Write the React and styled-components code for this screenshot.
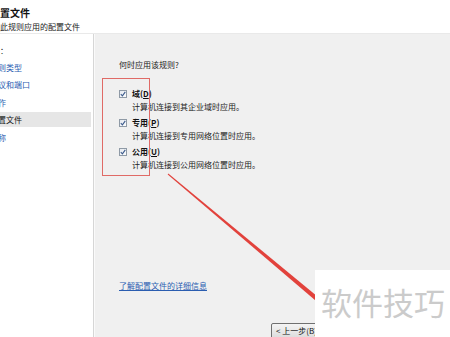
import React from 'react';
import styled, { createGlobalStyle } from 'styled-components';

const GlobalStyle = createGlobalStyle`
  html, body { margin: 0; padding: 0; background: #f0f0f0; }
  body { font-family: "Noto Sans CJK SC", "Noto Sans", sans-serif; }
`;

const Page = styled.div`
  position: relative;
  width: 450px;
  height: 337px;
  overflow: hidden;
  background: #f0f0f0;
`;

const Frame = styled.div`
  display: flex;
  flex-direction: column;
  margin-left: -16px;
  height: 100%;
`;

const TopEdge = styled.div`
  height: 2px;
  background: linear-gradient(to bottom, #c3cfe0, #8d99a8);
`;

const Header = styled.div`
  height: 40px;
  background: #fff;
  border-bottom: 1px solid #e9e9e9;
  display: flex;
  flex-direction: column;
  padding-top: 6px;
  box-sizing: border-box;
`;

const Title = styled.div`
  font-size: 10px;
  font-weight: 700;
  line-height: 14px;
  color: #111;
  padding-left: 6px;
`;

const Subtitle = styled.div`
  font-size: 8px;
  line-height: 13px;
  color: #222;
`;

const Body = styled.div`
  flex: 1;
  display: flex;
`;

const Sidebar = styled.div`
  width: 109px;
  background: #fff;
  border-right: 1px solid #d6d6d6;
  box-shadow: 1px 0 0 #fafafa;
  padding-top: 10px;
  display: flex;
  flex-direction: column;
`;

const StepsHead = styled.div`
  font-size: 8px;
  line-height: 13px;
  color: #222;
  margin-bottom: 3px;
`;

const Step = styled.div`
  font-size: 8px;
  line-height: 15px;
  height: 15px;
  margin-bottom: 2.4px;
  padding-left: 6px;
  color: ${p => (p.$active ? '#111' : '#2a5db0')};
  background: ${p => (p.$active ? '#e6e6e6' : 'transparent')};
  margin-right: 2px;
`;

const Content = styled.div`
  flex: 1;
  padding: 24px 0 0 23px;
  margin-left: 2px;
  display: flex;
  flex-direction: column;
`;

const Question = styled.div`
  font-size: 8px;
  line-height: 13px;
  color: #222;
  margin-bottom: 16px;
`;

const Options = styled.div`
  display: flex;
  flex-direction: column;
  gap: 3px;
`;

const Option = styled.div`
  display: grid;
  grid-template-columns: 8px 1fr;
  column-gap: 5px;
  align-items: center;
`;

const Box = styled.span`
  width: 8px;
  height: 8px;
  box-sizing: border-box;
  border: 1px solid #8f9aa6;
  background: linear-gradient(135deg, #e6eaf0, #fbfcfd);
  display: flex;
  align-items: center;
  justify-content: center;
`;

const Label = styled.div`
  font-size: 8px;
  line-height: 13px;
  font-weight: 700;
  color: #111;
`;

const Desc = styled.div`
  grid-column: 2;
  font-size: 8px;
  line-height: 13px;
  color: #222;
`;

const MoreLink = styled.a`
  margin-top: 108px;
  font-size: 8px;
  line-height: 13px;
  color: #2a5db0;
  text-decoration: underline;
  align-self: flex-start;
`;

const Footer = styled.div`
  display: flex;
  gap: 6px;
  margin-top: 31px;
  padding-left: 152px;
`;

const Button = styled.div`
  width: 66px;
  height: 16px;
  box-sizing: border-box;
  border: 1px solid #707070;
  border-radius: 2px;
  background: linear-gradient(to bottom, #f4f4f4, #dcdcdc);
  font-size: 8px;
  line-height: 14px;
  padding-left: 4px;
  color: #111;
`;

const RedBox = styled.div`
  position: absolute;
  left: 102px;
  top: 78px;
  width: 46px;
  height: 96px;
  border: 1px solid #e06a66;
`;

const Overlay = styled.svg`
  position: absolute;
  left: 0;
  top: 0;
`;

const Watermark = styled.div`
  position: absolute;
  left: 315px;
  top: 270px;
  right: 0;
  bottom: 0;
  background: #fff;
  font-size: 31px;
  line-height: 1;
  color: #cbcbcb;
  padding: 16px 0 0 6px;
  box-sizing: border-box;
`;

const Check = () => (
  <svg width="6" height="6" viewBox="0 0 6 6">
    <path d="M0.8 3.2 L2.4 4.8 L5.3 0.9" fill="none" stroke="#3c5a8c" strokeWidth="1.1" />
  </svg>
);

const options = [
  { label: '域', key: 'D', desc: '计算机连接到其企业域时应用。' },
  { label: '专用', key: 'P', desc: '计算机连接到专用网络位置时应用。' },
  { label: '公用', key: 'U', desc: '计算机连接到公用网络位置时应用。' },
];

const steps = ['规则类型', '协议和端口', '操作', '配置文件', '名称'];

export default function App() {
  return (
    <Page>
      <GlobalStyle />
      <Frame>
        <TopEdge />
        <Header>
          <Title>配置文件</Title>
          <Subtitle>指定此规则应用的配置文件</Subtitle>
        </Header>
        <Body>
          <Sidebar>
            <StepsHead>步骤：</StepsHead>
            {steps.map(s => (
              <Step key={s} $active={s === '配置文件'}>{s}</Step>
            ))}
          </Sidebar>
          <Content>
            <Question>何时应用该规则?</Question>
            <Options>
              {options.map(o => (
                <Option key={o.key}>
                  <Box><Check /></Box>
                  <Label>{o.label}(<u>{o.key}</u>)</Label>
                  <Desc>{o.desc}</Desc>
                </Option>
              ))}
            </Options>
            <MoreLink>了解配置文件的详细信息</MoreLink>
            <Footer>
              <Button>&lt; 上一步(B)</Button>
              <Button>下一步(N) &gt;</Button>
            </Footer>
          </Content>
        </Body>
      </Frame>
      <RedBox />
      <Overlay width="450" height="337">
        <polygon points="168.3,173.6 330.5,307.3 327.5,310.7 167.7,174.4" fill="#e2423c" />
      </Overlay>
      <Watermark>软件技巧</Watermark>
    </Page>
  );
}
